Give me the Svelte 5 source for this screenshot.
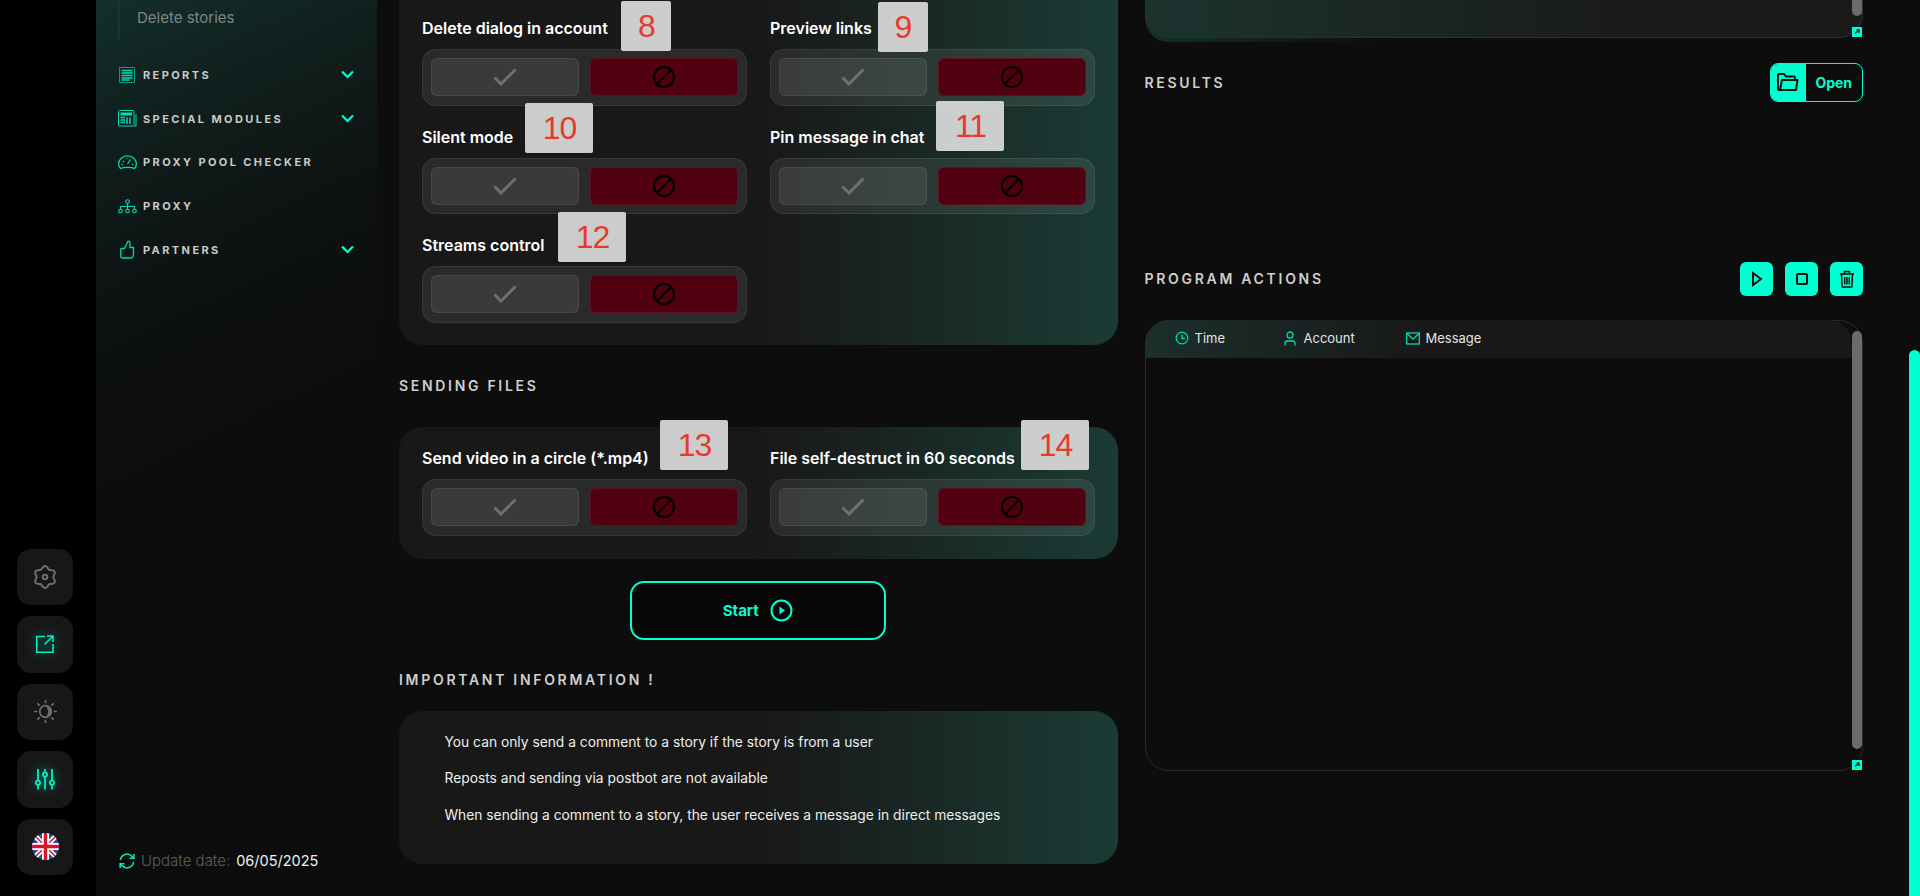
<script>
  const firstPanel = [
    { label: 'Delete dialog in account', chip: '8', x: 199, y: -15 },
    { label: 'Preview links', chip: '9', x: 107.5, y: -13.7 },
    { label: 'Silent mode', chip: '10', x: 103, y: -21.5 },
    { label: 'Pin message in chat', chip: '11', x: 166, y: -23.5 },
    { label: 'Streams control', chip: '12', x: 136, y: -20.7 }
  ];
  const secondPanel = [
    { label: 'Send video in a circle (*.mp4)', chip: '13', x: 238, y: -26 },
    { label: 'File self-destruct in 60 seconds', chip: '14', x: 251, y: -26 }
  ];
  const menu = [
    { label: 'REPORTS', icon: 'reports', more: true },
    { label: 'SPECIAL MODULES', icon: 'modules', more: true },
    { label: 'PROXY POOL CHECKER', icon: 'gauge', more: false },
    { label: 'PROXY', icon: 'tree', more: false },
    { label: 'PARTNERS', icon: 'thumb', more: true }
  ];
  const info = [
    'You can only send a comment to a story if the story is from a user',
    'Reposts and sending via postbot are not available',
    'When sending a comment to a story, the user receives a message in direct messages'
  ];
  const gear = Array.from({ length: 72 }, (_, i) => {
    const a = (i / 72) * Math.PI * 2 + Math.PI / 2;
    const r = 9.7 + 1.3 * Math.cos(6 * (a - Math.PI / 2));
    return (i ? 'L' : 'M') + (12 + r * Math.cos(a)).toFixed(2) + ' ' + (12 - r * Math.sin(a)).toFixed(2);
  }).join(' ') + 'Z';
</script>

{#snippet option(item)}
  <div class="option">
    <div class="label">{item.label}</div>
    <div class="chip" class:wide={item.chip.length > 1} style="left:{item.x}px;top:{item.y}px">{item.chip}</div>
    <div class="toggle">
      <button class="yes" aria-label="Yes">
        <svg width="24" height="18" viewBox="0 0 24 18"><path d="M1.5 9.5 8 16 22.500 1.500" fill="none" stroke="#6f6f6f" stroke-width="3"/></svg>
      </button>
      <button class="no" aria-label="No">
        <svg width="24" height="24" viewBox="0 0 24 24"><circle cx="12" cy="12" r="10" fill="none" stroke="#000" stroke-width="2"/><path d="M5 19 19 5" stroke="#000" stroke-width="2"/></svg>
      </button>
    </div>
  </div>
{/snippet}

<div class="page">
  <nav class="rail">
    <div class="rbtn">
      <svg width="24" height="24" viewBox="0 0 24 24" fill="none" stroke="#6e6e6e" stroke-width="2"><path d={gear} stroke-linejoin="round"/><circle cx="12" cy="12" r="2.300"/></svg>
    </div>
    <div class="rbtn">
      <svg class="glow" width="18" height="18" viewBox="0 0 18 18" fill="none" stroke="#00f0c4" stroke-width="1.600"><path d="M9 1.500H.8v15.700H17V9"/><path d="M8.500 9.500 16.500 1.500M11 1H17V7"/></svg>
    </div>
    <div class="rbtn">
      <svg width="25" height="25" viewBox="0 0 26 26" fill="none" stroke="#6e6e6e" stroke-width="1.800"><circle cx="13" cy="13" r="6"/><path d="M13 7A6 6 0 0 1 13 19 8 8 0 0 0 13 7Z" fill="#6e6e6e" stroke="none"/><path d="M13 1v3.500M13 21.500V25M1 13h3.500M21.500 13H25M4.500 4.500 7 7M19 19l2.500 2.500M4.500 21.500 7 19M19 7l2.500-2.500"/></svg>
    </div>
    <div class="rbtn">
      <svg class="glow" width="20" height="22" viewBox="0 0 20 22" fill="none" stroke="#00f0c4" stroke-width="1.800"><path d="M3 1v11.500M3 17v4.500M10 1v3M10 9v12.500M17 1v11.500M17 17v4.500"/><circle cx="3" cy="14.700" r="2.100"/><circle cx="10" cy="6.500" r="2.100"/><circle cx="17" cy="14.700" r="2.100"/></svg>
    </div>
    <div class="rbtn">
      <svg width="27" height="27" viewBox="0 0 27 27">
        <defs><clipPath id="fc"><circle cx="13.500" cy="13.500" r="13.500"/></clipPath></defs>
        <g clip-path="url(#fc)">
          <rect width="27" height="27" fill="#1f4fa8"/>
          <path d="M0 0 27 27M27 0 0 27" stroke="#fff" stroke-width="5"/>
          <path d="M0 0 27 27M27 0 0 27" stroke="#d8152f" stroke-width="1.500"/>
          <path d="M13.500 0v27M0 13.500h27" stroke="#fff" stroke-width="7"/>
          <path d="M13.500 0v27M0 13.500h27" stroke="#d8152f" stroke-width="3.400"/>
        </g>
      </svg>
    </div>
  </nav>

  <aside class="side">
    <div class="sub"><span>Delete stories</span></div>
    <ul class="menu">
      {#each menu as m}
        <li>
          <span class="micon">
            {#if m.icon === 'reports'}
              <svg width="18" height="18" viewBox="0 0 18 18" fill="none" stroke="#00dcb4"><rect x="1.500" y="1.500" width="15" height="15" stroke-dasharray="1.200 .6"/><path d="M3.500 4.500h11M3.500 7h11M3.500 9.500h11M3.500 12h11M3.500 14h8" stroke-width="1.300"/></svg>
            {:else if m.icon === 'modules'}
              <svg width="19" height="17" viewBox="0 0 19 17" fill="none" stroke="#00dcb4"><path d="M16 16H1.500a1 1 0 0 1-1-1V1.500a1 1 0 0 1 1-1H15a1 1 0 0 1 1 1V15"/><path d="M18 4v12H16"/><rect x="2.500" y="2.500" width="11.500" height="3" fill="#00dcb4" stroke="none"/><path d="M2.500 7.500H7M2.500 10h4.500M2.500 12.500h4.500M9 7.500v6.500M12 7.500v6.500" stroke-width="1.500"/></svg>
            {:else if m.icon === 'gauge'}
              <svg width="19" height="15" viewBox="0 0 19 15" fill="none" stroke="#00dcb4" stroke-width="1.200"><path d="M2.500 13.500C1 12 .6 10.500 .6 9 .6 4.500 4.500 .8 9.500 .8S18.400 4.500 18.400 9c0 1.500-.4 3-1.900 4.500-1.500-.8-4-1.200-7-1.200s-5.500.4-7 1.200Z"/><path d="M9.500 9 12.500 4.500M5 6l1 1M3.500 9.500H5M14 9.500h1.500M8.500 3.500h1"/></svg>
            {:else if m.icon === 'tree'}
              <svg width="19" height="15" viewBox="0 0 19 15" fill="none" stroke="#00dcb4" stroke-width="1.100"><circle cx="9.500" cy="2.500" r="1.800"/><circle cx="2.500" cy="12" r="1.800"/><circle cx="9.500" cy="12" r="1.800"/><circle cx="16.500" cy="12" r="1.800"/><path d="M9.500 4.300V10.200M2.500 10.200V7.500H16.500V10.200"/></svg>
            {:else}
              <svg class="thumbicon" width="15" height="19" viewBox="0 0 15 19" fill="none" stroke="#00dcb4" stroke-width="1.300"><path d="M1.500 8.500H4.500L8 1.200C9.500 1 10 2 10 3.500V7.500H13.500V13C13.500 16 12.500 18 11 18H3C1.500 18 .8 17.500 .8 16V9.500C.8 9 1 8.500 1.500 8.500Z" stroke-linejoin="round"/></svg>
            {/if}
          </span>
          <span class="mtext">{m.label}</span>
          {#if m.more}
            <svg class="chev" width="13" height="9" viewBox="0 0 13 9" fill="none" stroke="#00ffd1" stroke-width="2.200"><path d="M1 1.500 6.500 7 12 1.500"/></svg>
          {/if}
        </li>
      {/each}
    </ul>
    <div class="update">
      <svg width="16" height="16" viewBox="0 0 16 16" fill="none" stroke="#00ecc0" stroke-width="1.600"><path d="M1.500 7A6.500 6.500 0 0 1 13 3.500L14.500 5M14.500 9A6.500 6.500 0 0 1 3 12.500L1.500 11"/><path d="M14.800 1V5.300H10.500M1.200 15V10.700H5.500"/></svg>
      <span class="ulabel">Update date:</span>
      <span class="udate">06/05/2025</span>
    </div>
  </aside>

  <main class="content">
    <section class="col">
      <div class="panel first">
        <div class="grid">
          {#each firstPanel as item}
            {@render option(item)}
          {/each}
        </div>
      </div>

      <h2 class="title files">SENDING FILES</h2>
      <div class="panel second">
        <div class="grid">
          {#each secondPanel as item}
            {@render option(item)}
          {/each}
        </div>
      </div>

      <button class="start">
        <span>Start</span>
        <svg width="23" height="23" viewBox="0 0 23 23" fill="none"><circle cx="11.500" cy="11.500" r="10" stroke="#00ffd1" stroke-width="2"/><path d="M9.500 7.500 15 11.500 9.500 15.500Z" fill="#00ffd1"/></svg>
      </button>

      <h2 class="title imp">IMPORTANT INFORMATION !</h2>
      <div class="panel infop">
        {#each info as line}
          <p>{line}</p>
        {/each}
      </div>
    </section>

    <section class="col">
      <div class="topbox">
        <div class="topinner">
          <div class="thumb tt"></div>
          <div class="resize">
            <svg width="10" height="10" viewBox="0 0 10 10" fill="none" stroke="#0b3a32" stroke-width="1.500"><path d="M3 6.500 7 3M4.500 3H7V6"/></svg>
          </div>
        </div>
      </div>

      <div class="row results">
        <h2 class="title">RESULTS</h2>
        <button class="open">
          <span class="oicon">
            <svg width="22" height="20" viewBox="0 0 22 20" fill="none" stroke="#06140f" stroke-width="2"><path d="M3 18H2a1 1 0 0 1-1-1V3a1 1 0 0 1 1-1h5l2 2.500h8a1 1 0 0 1 1 1V7"/><path d="M5 8H20.500L19 18H3Z" stroke-linejoin="round"/></svg>
          </span>
          <span class="otext">Open</span>
        </button>
      </div>

      <div class="row actions">
        <h2 class="title">PROGRAM ACTIONS</h2>
        <div class="abtns">
          <button class="abtn" aria-label="Run"><svg width="14" height="16" viewBox="0 0 14 16" fill="none" stroke="#06140f" stroke-width="2"><path d="M3 2 11 8 3 14Z"/></svg></button>
          <button class="abtn" aria-label="Stop"><svg width="14" height="14" viewBox="0 0 14 14" fill="none" stroke="#06140f" stroke-width="2"><rect x="2" y="2" width="10" height="10" rx="1"/></svg></button>
          <button class="abtn" aria-label="Clear"><svg width="16" height="18" viewBox="0 0 16 18" fill="none" stroke="#06140f" stroke-width="1.500"><path d="M1 4H15M5.500 4V1.500H10.500V4M2.500 4 3.200 17H12.800L13.500 4M5.700 7V14.500M8 7V14.500M10.300 7V14.500"/></svg></button>
        </div>
      </div>

      <div class="table">
        <div class="thead">
          <div class="th t1">
            <svg width="14" height="14" viewBox="0 0 14 14" fill="none" stroke="#00dcb4" stroke-width="1.300"><circle cx="7" cy="7" r="5.800"/><path d="M7 3.500V7.500H10"/></svg>
            <span>Time</span>
          </div>
          <div class="th t2">
            <svg width="12" height="15" viewBox="0 0 12 15" fill="none" stroke="#00dcb4" stroke-width="1.300"><circle cx="6" cy="4" r="3"/><path d="M1 14.500V12.500C1 11 2 10 3.500 10H8.500C10 10 11 11 11 12.500V14.500"/></svg>
            <span>Account</span>
          </div>
          <div class="th t3">
            <svg width="14" height="13" viewBox="0 0 14 13" fill="none" stroke="#00dcb4" stroke-width="1.300"><rect x=".7" y="1" width="12.600" height="11"/><path d="M1 1.500 7 7 13 1.500"/></svg>
            <span>Message</span>
          </div>
        </div>
        <div class="thumb tb"></div>
        <div class="resize rb">
          <svg width="10" height="10" viewBox="0 0 10 10" fill="none" stroke="#0b3a32" stroke-width="1.500"><path d="M3 6.500 7 3M4.500 3H7V6"/></svg>
        </div>
      </div>
    </section>
  </main>

  <div class="scroll"><div class="sthumb"></div></div>
</div>

<style>
  :global(body) { margin: 0; background: #0d0d0d; }
  .page {
    display: flex; width: 1920px; height: 896px; overflow: hidden;
    background: #0d0d0d; color: #fff;
    font-family: Inter, "Liberation Sans", sans-serif;
  }
  h2, p, ul { margin: 0; padding: 0; }
  button { font-family: inherit; cursor: pointer; padding: 0; }

  .rail {
    width: 96px; flex: none; background: #000; box-sizing: border-box;
    display: flex; flex-direction: column; align-items: flex-start; justify-content: flex-end;
    gap: 11px; padding: 0 0 21px 17px;
  }
  .rbtn {
    width: 56px; height: 56.500px; border-radius: 14px; background: #171717;
    display: flex; align-items: center; justify-content: center;
  }
  .glow { filter: drop-shadow(0 0 6px rgba(0, 255, 209, .55)); }

  .side {
    width: 281px; flex: none; box-sizing: border-box; display: flex; flex-direction: column;
    background: linear-gradient(155deg, #13302c 0, #101f1d 130px, #0d1110 300px, #0c0c0c 480px);
  }
  .sub { margin-left: 22px; border-left: 2px solid #1b3631; height: 39px; padding-left: 17px; }
  .sub span { display: block; padding-top: 8px; font-size: 15px; line-height: 20px; color: #7e8584; }
  .menu { list-style: none; margin-top: 14px; }
  .menu li { display: flex; align-items: center; height: 43.750px; padding-left: 22px; }
  .micon { width: 25px; display: flex; align-items: center; flex: none; }
  .thumbicon { margin-left: 2px; }
  .mtext { font-size: 11px; font-weight: 700; letter-spacing: 2.400px; color: #c8cbca; white-space: nowrap; }
  .chev { margin-left: auto; margin-right: 23px; }
  .update { margin-top: auto; margin-bottom: 27px; padding-left: 23px; display: flex; align-items: center; line-height: 16px; }
  .ulabel { margin-left: 6px; color: #5f5f5f; font-weight: 300; font-size: 15px; }
  .udate { margin-left: 6px; color: #f0f0f0; font-size: 14.500px; }

  .content { flex: 1; display: flex; padding-left: 22px; gap: 27px; min-width: 0; }
  .col { width: 718.500px; flex: none; }
  .panel { box-sizing: border-box; background: linear-gradient(90deg, #181818 50%, #1b3b34 100%); border-radius: 24px; }
  .first { height: 345px; padding: 16px 23px 0; border-radius: 0 0 24px 24px; }
  .second { margin-top: 31px; padding: 19px 23px 23px; }
  .grid { display: grid; grid-template-columns: 325px 325px; column-gap: 23px; row-gap: 19px; }
  .option { position: relative; }
  .label { height: 24px; line-height: 24px; font-size: 16px; font-weight: 600; color: #fff; white-space: nowrap; margin-bottom: 9px; }
  .chip {
    position: absolute; width: 50px; height: 50px; background: rgba(214, 214, 214, .95); border-radius: 2px;
    color: #e73a2e; font: 32px/50px "Liberation Sans", sans-serif; letter-spacing: -1px; text-align: center; z-index: 1;
    box-sizing: border-box; padding-left: 1px;
  }
  .chip.wide { width: 68px; }
  .toggle {
    box-sizing: border-box; height: 56.500px; padding: 8px; display: flex; gap: 11.500px;
    background: rgba(255, 255, 255, .08); border: 1px solid rgba(255, 255, 255, .07); border-radius: 14px;
  }
  .yes, .no { flex: 1; height: 38px; border-radius: 6px; display: flex; align-items: center; justify-content: center; }
  .yes { background: rgba(255, 255, 255, .08); border: 1px solid rgba(255, 255, 255, .08); }
  .no { background: #50000e; border: 1px solid #5f0f1d; }

  .title { font-size: 14px; line-height: 20px; font-weight: 600; letter-spacing: 2.700px; color: #cfcfcf; }
  .files { margin-top: 31px; }
  .start {
    display: flex; align-items: center; justify-content: center; gap: 11px;
    width: 256.500px; height: 59.500px; margin: 22px 0 0 230.500px; box-sizing: border-box;
    background: #070707; border: 2px solid #00ffd1; border-radius: 14px;
    color: #00ffd1; font-size: 15px; font-weight: 700;
  }
  .imp { margin-top: 29.500px; }
  .infop {
    margin-top: 21px; height: 153.500px; padding: 21px 0 0 45.500px;
    display: flex; flex-direction: column; gap: 16.500px;
  }
  .infop p { font-size: 13.800px; line-height: 20px; color: #eee; }

  .topbox { height: 41.500px; background: linear-gradient(90deg, #12312b, #0d0d0d 32%); border-radius: 0 0 24px 24px; }
  .topinner {
    position: relative; box-sizing: border-box; height: 38px; border: 1px solid #2c2f2e; border-top: 0;
    border-radius: 0 0 24px 24px; background: linear-gradient(90deg, #1c332e, #1a1a1a 70%);
  }
  .thumb { position: absolute; right: 0; width: 10px; background: #6b6b6b; border-radius: 5px; }
  .tt { top: 0; height: 16px; border-radius: 0 0 5px 5px; }
  .resize { position: absolute; right: 0; bottom: 0; width: 10px; height: 10px; background: #00ffd1; display: flex; }
  .row { display: flex; align-items: center; justify-content: space-between; }
  .results { margin-top: 21.500px; }
  .results .title { padding-top: 2px; }
  .open {
    display: flex; width: 93.500px; height: 38.700px; background: transparent; box-sizing: border-box;
    border: 1px solid #00ffd1; border-radius: 8px; overflow: hidden;
  }
  .oicon { width: 35px; background: #00ffd1; display: flex; align-items: center; justify-content: center; }
  .otext { flex: 1; color: #00ffd1; font-size: 14px; font-weight: 700; align-self: center; }
  .actions { margin-top: 160.300px; }
  .abtns { display: flex; gap: 12px; }
  .abtn { width: 33px; height: 34px; border: 0; border-radius: 6px; background: #00ffd1; display: flex; align-items: center; justify-content: center; }
  .table {
    position: relative; box-sizing: border-box; margin-top: 24px; height: 451px;
    border: 1px solid #2a2a2a; border-radius: 24px;
  }
  .thead {
    display: flex; height: 38px; margin: -1px 10px 0 -1px; border-radius: 24px 24px 0 0;
    background: linear-gradient(90deg, #1b2f2b, #181818 40%);
  }
  .th { position: absolute; top: 9px; display: flex; align-items: center; gap: 7px; font-size: 13px; line-height: 17px; color: #e4e4e4; }
  .t1 { left: 29px; gap: 6px; }
  .t2 { left: 138px; gap: 8px; }
  .t3 { left: 260px; gap: 6px; }
  .tb { top: 10px; height: 418px; }
  .rb { bottom: 0; }
  .scroll { width: 11px; flex: none; margin-left: auto; }
  .sthumb { margin-top: 350px; height: 546px; background: #00ffd1; border-radius: 6px 6px 0 0; }
</style>
